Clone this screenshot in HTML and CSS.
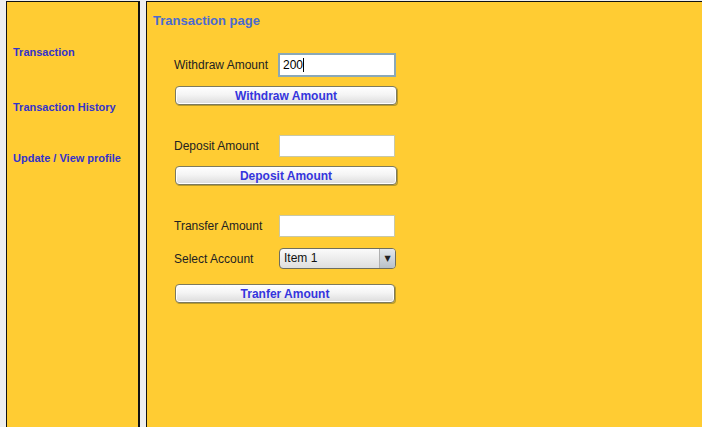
FILE: index.html
```html
<!DOCTYPE html>
<html>
<head>
<meta charset="utf-8">
<link rel="stylesheet" href="styles.css">
</head>
<body>
<div class="app">
  <nav class="side">
    <a class="nav-item first">Transaction</a>
    <a class="nav-item second">Transaction History</a>
    <a class="nav-item third">Update / View profile</a>
  </nav>
  <main class="main">
    <h1 class="title">Transaction page</h1>
    <div class="form">
      <div class="row r-withdraw">
        <span class="label">Withdraw Amount</span>
        <div class="input focus">200<span class="caret"></span></div>
      </div>
      <button class="btn b-withdraw">Withdraw Amount</button>

      <div class="row r-deposit">
        <span class="label">Deposit Amount</span>
        <div class="input"></div>
      </div>
      <button class="btn b-deposit">Deposit Amount</button>

      <div class="row r-transfer">
        <span class="label">Transfer Amount</span>
        <div class="input"></div>
      </div>
      <div class="row r-select">
        <span class="label">Select Account</span>
        <div class="select"><span class="sel-text">Item 1</span><span class="sel-arrow">&#9660;</span></div>
      </div>
      <button class="btn b-transfer">Tranfer Amount</button>
    </div>
  </main>
</div>
</body>
</html>
```
FILE: styles.css
```css
html, body {
  margin: 0;
  padding: 0;
  background: #eeeeee;
  overflow: hidden;
}
.app {
  display: flex;
  padding-top: 1px;
  padding-left: 6px;
  gap: 6px;
  height: 460px;
  width: 760px;
}
.side {
  flex: none;
  background: #ffcc33;
  border: 1px solid #111;
  border-right-width: 2px;
  display: flex;
  flex-direction: column;
  padding-left: 6px;
  box-sizing: border-box;
  width: 134px;
}
.nav-item {
  font-family: "Liberation Sans", Arial, sans-serif;
  font-weight: bold;
  font-size: 11px;
  color: #3333cc;
  line-height: 13px;
  display: block;
}
.first { margin-top: 44px; }
.second { margin-top: 42px; }
.third { margin-top: 38px; }

.main {
  flex: 1;
  background: #ffcc33;
  border: 1px solid #111;
  padding-left: 6px;
}
.title {
  margin: 11px 0 0 0;
  font-family: "Liberation Sans", Arial, sans-serif;
  font-weight: bold;
  font-size: 13px;
  line-height: 16px;
  color: #4a6bd0;
}
.form {
  margin-left: 21px;
  width: 224px;
  display: flex;
  flex-direction: column;
}
.row {
  display: flex;
  align-items: center;
}
.label {
  width: 104px;
  font-family: "Liberation Sans", Arial, sans-serif;
  font-size: 12px;
  color: #222;
}
.input {
  width: 116px;
  height: 22px;
  box-sizing: border-box;
  background: #fff;
  border: 1px solid #c8c8a8;
  font-family: "Liberation Sans", Arial, sans-serif;
  font-size: 12px;
  line-height: 20px;
  padding-left: 4px;
  color: #000;
}
.input.focus {
  width: 118px;
  height: 24px;
  border: 2px solid #8aa8b8;
  line-height: 20px;
  padding-left: 3px;
}
.caret {
  display: inline-block;
  width: 1px;
  height: 14px;
  background: #000;
  vertical-align: -3px;
}
.r-withdraw { margin-top: 24px; }
.r-deposit { margin-top: 30px; }
.r-deposit .input { margin-left: 1px; }
.r-transfer { margin-top: 30px; }
.r-transfer .input { margin-left: 1px; }
.r-select { margin-top: 11px; }

.btn {
  display: block;
  margin: 0;
  margin-left: 1px;
  width: 222px;
  height: 19px;
  box-sizing: border-box;
  border: 1px solid #7d7a5e;
  border-radius: 4px;
  background: linear-gradient(#ffffff 0%, #f4f4f4 45%, #dcdcdc 100%);
  box-shadow: inset 0 0 0 1px #fff, 1px 1px 0 #b79a2a;
  font-family: "Liberation Sans", Arial, sans-serif;
  font-weight: bold;
  font-size: 12px;
  line-height: 16px;
  color: #3535dd;
  padding: 0;
  text-align: center;
}
.b-withdraw { margin-top: 9px; }
.b-deposit { margin-top: 9px; }
.b-transfer { margin-top: 15px; width: 220px; }

.select {
  margin-left: 1px;
  width: 117px;
  height: 21px;
  box-sizing: border-box;
  border: 1px solid #6e6e5e;
  border-radius: 4px;
  background: linear-gradient(#fbfbfb, #dedede);
  display: flex;
  overflow: hidden;
}
.sel-text {
  flex: 1;
  font-family: "Liberation Sans", Arial, sans-serif;
  font-size: 12px;
  line-height: 19px;
  padding-left: 4px;
  color: #111;
}
.sel-arrow {
  width: 15px;
  border-left: 1px solid #b0b0b0;
  background: linear-gradient(#e4e8ec, #b8c0c8);
  font-family: "DejaVu Sans", sans-serif;
  font-size: 8px;
  line-height: 19px;
  text-align: center;
  color: #222;
}
```
